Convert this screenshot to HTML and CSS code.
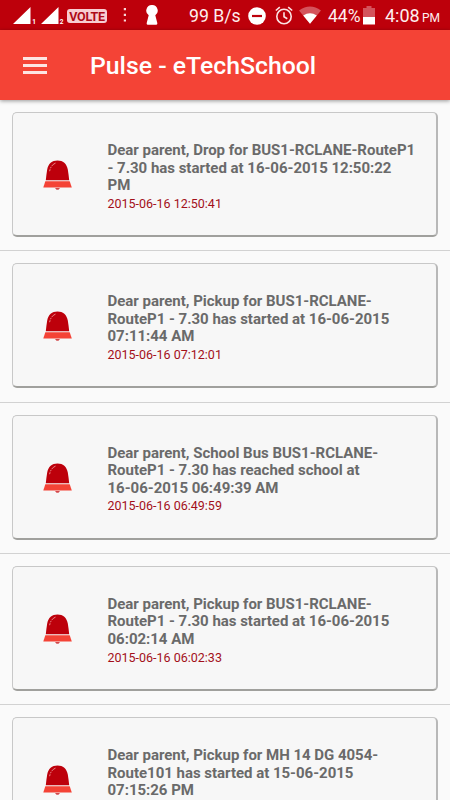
FILE: index.html
```html
<!DOCTYPE html>
<html lang="en">
<head>
    <meta charset="UTF-8">
    <meta name="viewport" content="width=device-width, initial-scale=1.0">
    <title>Pulse - eTechSchool</title>
    <link rel="stylesheet" href="styles.css">
</head>
<body>
    <svg width="0" height="0" class="defs">
        <symbol id="bell" viewBox="0 0 30 30">
            <path d="M12 28h5l-1.500 1.800h-2z" fill="#d2474a"/>
            <path d="M2.800 20.200C3.300 16.500 3.500 13 4.200 9.500 5.200 3.500 9 .4 14.500 .4s9.300 3.100 10.300 9.100c.7 3.500 .9 7 1.400 10.700z" fill="#bd000b"/>
            <path d="M2.300 21.200h24.400l2.100 6.400H.3z" fill="#f44336"/>
            <path d="M12.500 3.100C9.500 4.300 7.400 7 6.600 11.200" fill="none" stroke="#f5a5a4" stroke-width=".8" stroke-dasharray="5 1 1.500 1"/>
        </symbol>
    </svg>

    <div class="status-bar">
        <svg class="signals" width="53" height="20" viewBox="0 0 53 20">
            <path d="M0 18L17.500 1v17zM28 18L45.500 1v17z" fill="#fff"/>
            <text x="19.200" y="17.500">1</text>
            <text x="46.700" y="17.500">2</text>
        </svg>
        <span class="volte">VOLTE</span>
        <svg class="dots" width="4" height="16" viewBox="0 0 4 16">
            <path d="M.8 1h2.200v2.200H.8zM.8 6.700h2.200v2.200H.8zM.8 12.400h2.200v2.200H.8z" fill="#f7d5d7"/>
        </svg>
        <svg class="keyhole" width="14" height="20" viewBox="0 0 14 20">
            <path d="M7 0a5.600 5.600 0 0 1 3.300 10.200L12.300 18q.3 1.700-1.300 1.700H3q-1.600 0-1.300-1.700L3.700 10.200A5.600 5.600 0 0 1 7 0z" fill="#fff"/>
        </svg>
        <span class="speed">99 B/s</span>
        <svg class="dnd" width="18" height="18" viewBox="0 0 18 18">
            <circle cx="9" cy="9" r="8.800" fill="#fff"/>
            <path d="M4 7.900h10v2.200H4z" fill="#bd000b"/>
        </svg>
        <svg class="alarm" width="18" height="19" viewBox="0 0 18 19" fill="none" stroke="#fbe3e4" stroke-width="1.600">
            <circle cx="9" cy="10.500" r="7.200"/>
            <path d="M.8 4.500l4-3.400M17.200 4.500l-4-3.400M9 6.300v4.500l3.300 2"/>
        </svg>
        <svg class="wifi" width="22" height="18" viewBox="0 0 22 18">
            <path d="M0 4.500Q11-3.500 22 4.500L11 17.800z" fill="#d4535c"/>
            <path d="M4.200 9.600Q11 4.800 17.800 9.600L11 17.800z" fill="#fff"/>
        </svg>
        <span class="percent">44%</span>
        <svg class="battery" width="12" height="19" viewBox="0 0 12 19">
            <path d="M0 2h3.500V0h5v2H12v9H0z" fill="#d4535c"/>
            <path d="M0 11h12v7.500H0z" fill="#fff"/>
        </svg>
        <span class="time">4:08</span>
        <span class="ampm">PM</span>
    </div>

    <div class="toolbar">
        <div class="menu">
            <span></span>
            <span></span>
            <span></span>
        </div>
        <h1>Pulse - eTechSchool</h1>
    </div>

    <div class="list">
        <div class="item">
            <div class="card">
                <svg class="bell"><use href="#bell"/></svg>
                <div class="message">
                    <p>Dear parent, Drop for BUS1-RCLANE-RouteP1<br>- 7.30 has started at 16-06-2015 12:50:22<br>PM</p>
                    <span class="date">2015-06-16 12:50:41</span>
                </div>
            </div>
        </div>
        <div class="item">
            <div class="card">
                <svg class="bell"><use href="#bell"/></svg>
                <div class="message">
                    <p>Dear parent, Pickup for BUS1-RCLANE-<br>RouteP1 - 7.30 has started at 16-06-2015<br>07:11:44 AM</p>
                    <span class="date">2015-06-16 07:12:01</span>
                </div>
            </div>
        </div>
        <div class="item">
            <div class="card">
                <svg class="bell"><use href="#bell"/></svg>
                <div class="message">
                    <p>Dear parent, School Bus BUS1-RCLANE-<br>RouteP1 - 7.30 has reached school at<br>16-06-2015 06:49:39 AM</p>
                    <span class="date">2015-06-16 06:49:59</span>
                </div>
            </div>
        </div>
        <div class="item">
            <div class="card">
                <svg class="bell"><use href="#bell"/></svg>
                <div class="message">
                    <p>Dear parent, Pickup for BUS1-RCLANE-<br>RouteP1 - 7.30 has started at 16-06-2015<br>06:02:14 AM</p>
                    <span class="date">2015-06-16 06:02:33</span>
                </div>
            </div>
        </div>
        <div class="item">
            <div class="card">
                <svg class="bell"><use href="#bell"/></svg>
                <div class="message">
                    <p>Dear parent, Pickup for MH 14 DG 4054-<br>Route101 has started at 15-06-2015<br>07:15:26 PM</p>
                </div>
            </div>
        </div>
    </div>
</body>
</html>
```
FILE: styles.css
```css
* {
    box-sizing: border-box;
}
body {
    margin: 0;
    height: 800px;
    overflow: hidden;
    font-family: Roboto, sans-serif;
    background-color: #fafafa;
    display: flex;
    flex-direction: column;
}
.defs {
    position: absolute;
}

/* status bar */
.status-bar {
    flex: none;
    height: 30px;
    padding-left: 13px;
    background-color: #bd000b;
    color: #fdeeee;
    display: flex;
    align-items: center;
    font-size: 18px;
    line-height: 30px;
    white-space: nowrap;
}
.status-bar > * {
    flex: none;
}
.signals {
    margin-top: 1px;
}
.signals text {
    font-size: 6.5px;
    font-weight: bold;
    fill: #fff;
}
.volte {
    width: 40px;
    height: 14px;
    margin: 2px 0 0 1px;
    border-radius: 3px;
    background-color: #f8cdd2;
    color: #ad0a18;
    font-size: 12.5px;
    font-weight: bold;
    line-height: 15px;
    letter-spacing: -0.3px;
    text-align: center;
}
.dots {
    margin-left: 16px;
}
.keyhole {
    margin-left: 18px;
}
.speed {
    width: 59px;
    margin-left: 30px;
    padding-top: 2px;
    font-size: 17.7px;
}
.dnd {
    margin-top: 1px;
}
.alarm {
    margin-left: 9px;
}
.wifi {
    margin-left: 6px;
}
.percent {
    width: 35px;
    margin-left: 7px;
    padding-top: 2px;
    font-size: 17.5px;
}
.time {
    width: 37px;
    margin-left: 10px;
    padding-top: 2px;
}
.ampm {
    padding-top: 5px;
    font-size: 12px;
}

/* toolbar */
.toolbar {
    flex: none;
    height: 70px;
    padding-left: 23px;
    background-color: #f44336;
    box-shadow: 0 1px 4px rgba(0, 0, 0, 0.4);
    display: flex;
    align-items: center;
    z-index: 1;
}
.menu {
    width: 24px;
    margin-right: 43px;
    display: grid;
    gap: 4px;
}
.menu span {
    height: 3px;
    background-color: #fde4e2;
}
.toolbar h1 {
    margin: 2px 0 0;
    color: #fff;
    font-size: 24.8px;
    font-weight: 500;
    line-height: 30px;
}

/* notifications */
.list {
    flex: 1;
    min-height: 0;
    overflow: hidden;
}
.item {
    height: 151.25px;
    padding: 12px 12px 13px;
    border-bottom: 1px solid #d2d2d2;
}
.card {
    height: 125px;
    padding-left: 30px;
    background-color: #f7f7f7;
    border: 1px solid #c8c8c8;
    border-right: 2px solid #b8b8b8;
    border-bottom: 2px solid #a0a09d;
    border-radius: 5px;
    display: flex;
}
.bell {
    width: 30px;
    height: 30px;
    margin-top: 47px;
}
.message {
    margin: 29px 0 0 34.5px;
    white-space: nowrap;
}
.message p {
    margin: 0;
    color: #6a6a6a;
    font-size: 15px;
    font-weight: bold;
    line-height: 17.6px;
    letter-spacing: -0.02px;
}
.date {
    display: block;
    color: #a3101a;
    font-size: 12.5px;
    line-height: 17px;
}
```
